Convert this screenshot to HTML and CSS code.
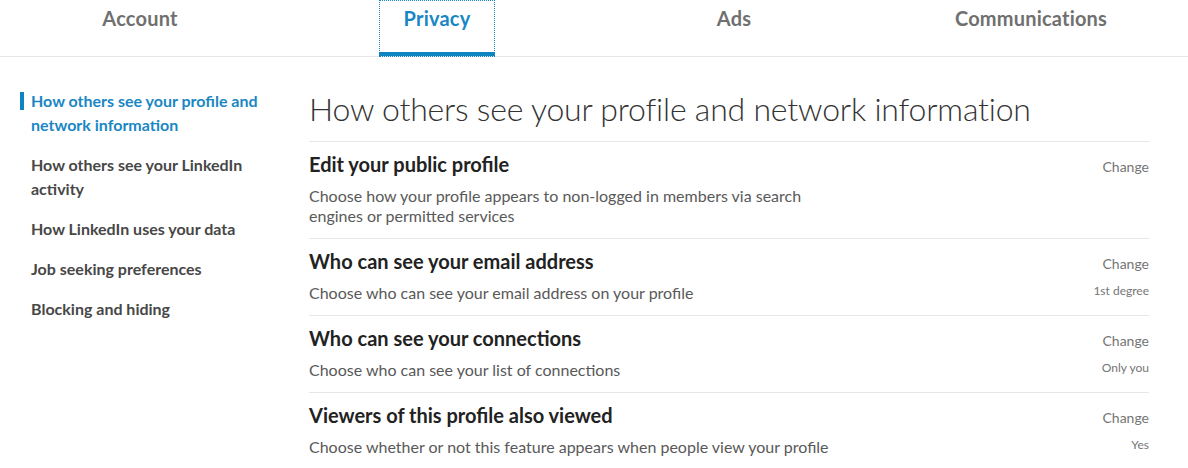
FILE: index.html
```html
<!DOCTYPE html>
<html lang="en">
<head>
<meta charset="utf-8">
<title>Privacy settings</title>
<link rel="stylesheet" href="styles.css">
</head>
<body>
<nav class="tabs">
  <a class="tab">Account</a>
  <a class="tab tab-active">Privacy</a>
  <a class="tab">Ads</a>
  <a class="tab">Communications</a>
</nav>
<div class="page">
  <aside class="side">
    <a class="side-item side-active">How others see your profile and network information</a>
    <a class="side-item">How others see your LinkedIn activity</a>
    <a class="side-item">How LinkedIn uses your data</a>
    <a class="side-item">Job seeking preferences</a>
    <a class="side-item">Blocking and hiding</a>
  </aside>
  <main class="main">
    <h1 class="heading">How others see your profile and network information</h1>
    <section class="row">
      <div class="row-text">
        <h2 class="row-title">Edit your public profile</h2>
        <p class="row-desc narrow">Choose how your profile appears to non-logged in members via search engines or permitted services</p>
      </div>
      <div class="row-side">
        <span class="change">Change</span>
      </div>
    </section>
    <section class="row">
      <div class="row-text">
        <h2 class="row-title">Who can see your email address</h2>
        <p class="row-desc">Choose who can see your email address on your profile</p>
      </div>
      <div class="row-side">
        <span class="change">Change</span>
        <span class="value">1st degree</span>
      </div>
    </section>
    <section class="row">
      <div class="row-text">
        <h2 class="row-title">Who can see your connections</h2>
        <p class="row-desc">Choose who can see your list of connections</p>
      </div>
      <div class="row-side">
        <span class="change">Change</span>
        <span class="value">Only you</span>
      </div>
    </section>
    <section class="row">
      <div class="row-text">
        <h2 class="row-title">Viewers of this profile also viewed</h2>
        <p class="row-desc">Choose whether or not this feature appears when people view your profile</p>
      </div>
      <div class="row-side">
        <span class="change">Change</span>
        <span class="value">Yes</span>
      </div>
    </section>
  </main>
</div>
</body>
</html>
```

FILE: styles.css
```css
* { box-sizing: border-box; }
html, body { margin: 0; padding: 0; background: #fff; }
body {
  font-family: "Lato", "Liberation Sans", sans-serif;
  color: #333;
  overflow: hidden;
}
.tabs {
  display: grid;
  grid-template-columns: repeat(4, 297px);
  height: 57px;
  border-bottom: 1px solid #e6e6e6;
}
.tab {
  display: flex;
  justify-content: center;
  padding-right: 17px;
  padding-top: 6px;
  font-size: 20px;
  line-height: 24px;
  font-weight: 700;
  color: #707070;
  letter-spacing: 0.2px;
}
.tab-active {
  color: #1a87c4;
  justify-self: center;
  width: 116px;
  padding-right: 0;
  margin-right: 17px;
  height: 57px;
  outline: 1px dotted #1a87c4;
  outline-offset: -1px;
  box-shadow: inset 0 -4px 0 #0e84c0;
  border-bottom: 1px dotted #1a87c4;
}
.page {
  display: flex;
  padding-top: 32px;
}
.side {
  width: 309px;
  padding-left: 20px;
  display: flex;
  flex-direction: column;
  gap: 16px;
}
.side-item {
  position: relative;
  display: block;
  padding-left: 11px;
  padding-right: 28px;
  font-size: 16px;
  line-height: 24px;
  font-weight: 700;
  color: #474747;
}
.side-active {
  color: #1a87c4;
}
.side-active::before {
  content: "";
  position: absolute;
  left: 0;
  top: 3px;
  width: 4px;
  height: 18px;
  background: #0e84c0;
}
.main {
  width: 840px;
}
.heading {
  margin: 0 0 12px;
  font-size: 32px;
  line-height: 40px;
  font-weight: 300;
  letter-spacing: -0.2px;
  color: #333;
}
.row {
  display: flex;
  justify-content: space-between;
  border-top: 1px solid #e6e6e6;
  padding: 10px 0 12px;
}
.row-title {
  margin: 0;
  font-size: 20px;
  line-height: 24px;
  font-weight: 700;
  color: #222;
}
.row-desc {
  margin: 10px 0 0;
  font-size: 16px;
  line-height: 20px;
  color: #595959;
}
.narrow { max-width: 510px; }
.row-side {
  display: flex;
  flex-direction: column;
  align-items: flex-end;
  padding-top: 5px;
}
.change {
  font-size: 14px;
  line-height: 20px;
  color: #757575;
}
.value {
  margin-top: 9px;
  font-size: 12px;
  line-height: 16px;
  color: #757575;
}
```
